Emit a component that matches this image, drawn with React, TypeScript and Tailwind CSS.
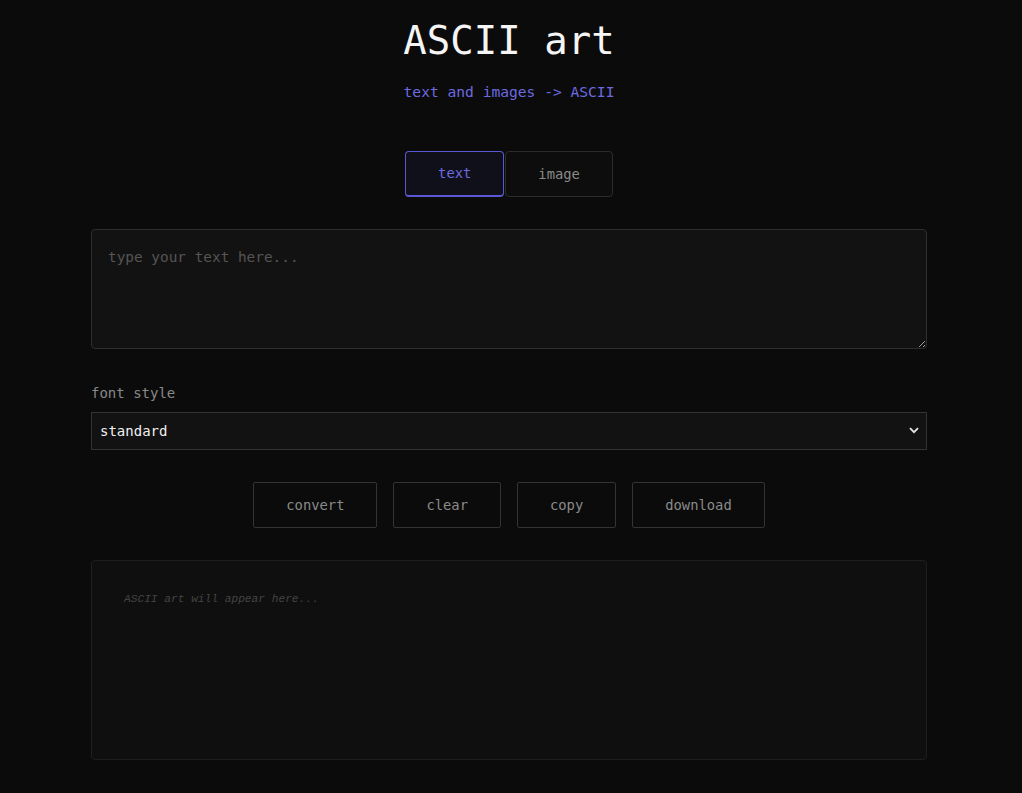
import React, { useState } from 'react';

const mono = "font-['DejaVu_Sans_Mono',monospace]";

const App: React.FC = () => {
  const [mode, setMode] = useState<'text' | 'image'>('text');
  const actions = ['convert', 'clear', 'copy', 'download'];

  return (
    <div className={`min-h-screen bg-[#0b0b0b] ${mono} text-[#e5e5e5] pr-[4px]`}>
      <div className="w-[836px] mx-auto pt-[18px] pb-10">
        {/* Header */}
        <div className="text-center">
          <h1 className="text-[39px] leading-[46px] font-normal text-[#f5f5f5]">ASCII art</h1>
          <p className="mt-[18px] text-[14.6px] leading-[20px] text-[#6d6ae0]">text and images -&gt; ASCII</p>
        </div>

        {/* Tabs */}
        <div className="mt-[49px] flex justify-center gap-px">
          <button
            onClick={() => setMode('text')}
            className={`h-[46px] px-8 rounded text-[13.8px] border ${
              mode === 'text'
                ? 'bg-[#10101a] border-[#5b58d6] border-b-2 text-[#6d6ae0]'
                : 'bg-[#0d0d0d] border-[#2c2c2c] text-[#8a8a8a]'
            }`}
          >
            text
          </button>
          <button
            onClick={() => setMode('image')}
            className={`h-[46px] px-8 rounded text-[13.8px] border ${
              mode === 'image'
                ? 'bg-[#10101a] border-[#5b58d6] border-b-2 text-[#6d6ae0]'
                : 'bg-[#0d0d0d] border-[#2c2c2c] text-[#8a8a8a]'
            }`}
          >
            image
          </button>
        </div>

        {/* Input */}
        <textarea
          placeholder="type your text here..."
          className="mt-8 block w-full h-[120px] rounded bg-[#121212] border border-[#2e2e2e] p-4 text-[14.4px] leading-[22px] text-[#e5e5e5] placeholder:text-[#555] outline-none"
        />

        {/* Font style */}
        <label className="block mt-[34px] text-[14px] leading-[20px] text-[#8a8a8a]">font style</label>
        <div className="relative mt-[9px]">
          <select className="appearance-none block w-full h-[38px] bg-[#121212] border border-[#333] px-2 text-[14px] text-[#f0f0f0] outline-none">
            <option>standard</option>
          </select>
          <svg
            className="absolute right-[8px] top-[15px] pointer-events-none"
            width="10"
            height="7"
            viewBox="0 0 10 7"
            fill="none"
          >
            <path d="M1 1.2 5 5.2 9 1.2" stroke="#e5e5e5" strokeWidth="1.8" />
          </svg>
        </div>

        {/* Actions */}
        <div className="mt-8 flex justify-center gap-4">
          {actions.map((a) => (
            <button
              key={a}
              className="h-[46px] px-8 rounded-[2px] bg-[#0b0b0b] border border-[#333] text-[13.8px] text-[#8a8a8a]"
            >
              {a}
            </button>
          ))}
        </div>

        {/* Output */}
        <div className="mt-8 h-[200px] rounded bg-[#0f0f0f] border border-[#1f1f1f] px-8 pt-[31px]">
          <pre className="font-['Liberation_Mono',monospace] italic text-[11.2px] leading-[14px] text-[#444]">
            ASCII art will appear here...
          </pre>
        </div>
      </div>
    </div>
  );
};

export default App;
